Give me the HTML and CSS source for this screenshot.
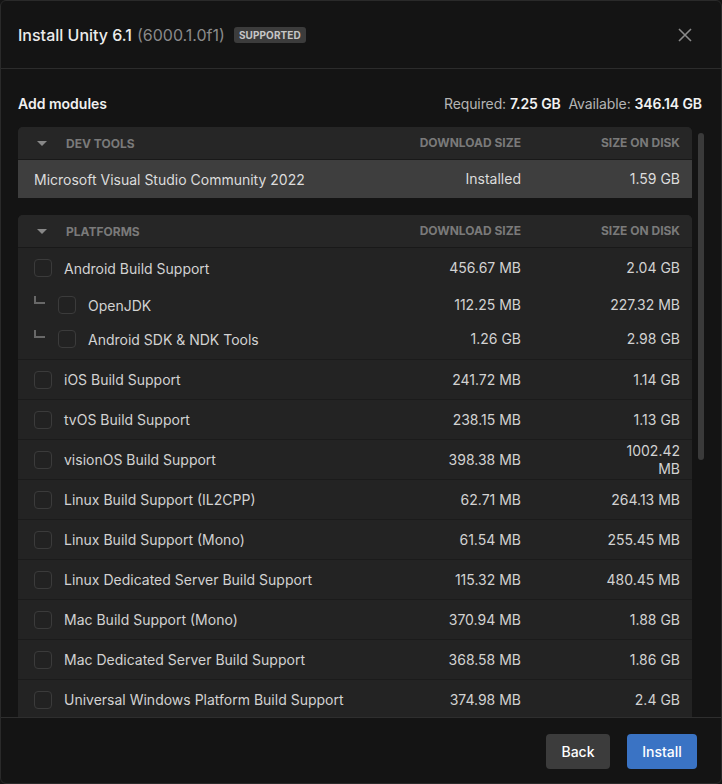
FILE: index.html
```html
<!DOCTYPE html>
<html lang="en">
<head>
<meta charset="utf-8">
<title>Install Unity 6.1</title>
<link rel="stylesheet" href="styles.css">
</head>
<body>
<div class="dialog">
  <header class="dlg-header">
    <div class="title">
      <span class="title-main">Install Unity 6.1</span>
      <span class="title-ver">(6000.1.0f1)</span>
      <span class="badge">SUPPORTED</span>
    </div>
    <button class="close" aria-label="Close">
      <svg width="14" height="14" viewBox="0 0 14 14"><path d="M1 1L13 13M13 1L1 13" stroke="#8a8a8a" stroke-width="1.6" fill="none"/></svg>
    </button>
  </header>

  <main class="dlg-body">
    <div class="summary">
      <span class="summary-title">Add modules</span>
      <span class="summary-info">Required: <b>7.25 GB</b>&nbsp;&nbsp;Available: <b>346.14 GB</b></span>
    </div>

    <div class="list">
      <section class="card">
        <div class="row head">
          <div class="name"><span class="caret"></span><span>DEV TOOLS</span></div>
          <div class="num">DOWNLOAD SIZE</div>
          <div class="num">SIZE ON DISK</div>
        </div>
        <div class="row item selected">
          <div class="name"><span>Microsoft Visual Studio Community 2022</span></div>
          <div class="num">Installed</div>
          <div class="num">1.59 GB</div>
        </div>
      </section>

      <section class="card">
        <div class="row head">
          <div class="name"><span class="caret"></span><span>PLATFORMS</span></div>
          <div class="num">DOWNLOAD SIZE</div>
          <div class="num">SIZE ON DISK</div>
        </div>
        <div class="group">
          <div class="row parent">
            <div class="name"><span class="check"></span><span>Android Build Support</span></div>
            <div class="num">456.67 MB</div>
            <div class="num">2.04 GB</div>
          </div>
          <div class="row sub">
            <div class="name"><span class="branch"></span><span class="check"></span><span>OpenJDK</span></div>
            <div class="num">112.25 MB</div>
            <div class="num">227.32 MB</div>
          </div>
          <div class="row sub">
            <div class="name"><span class="branch"></span><span class="check"></span><span>Android SDK &amp; NDK Tools</span></div>
            <div class="num">1.26 GB</div>
            <div class="num">2.98 GB</div>
          </div>
        </div>
        <div class="row item">
          <div class="name"><span class="check"></span><span>iOS Build Support</span></div>
          <div class="num">241.72 MB</div>
          <div class="num">1.14 GB</div>
        </div>
        <div class="row item">
          <div class="name"><span class="check"></span><span>tvOS Build Support</span></div>
          <div class="num">238.15 MB</div>
          <div class="num">1.13 GB</div>
        </div>
        <div class="row item">
          <div class="name"><span class="check"></span><span>visionOS Build Support</span></div>
          <div class="num">398.38 MB</div>
          <div class="num">1002.42 MB</div>
        </div>
        <div class="row item">
          <div class="name"><span class="check"></span><span>Linux Build Support (IL2CPP)</span></div>
          <div class="num">62.71 MB</div>
          <div class="num">264.13 MB</div>
        </div>
        <div class="row item">
          <div class="name"><span class="check"></span><span>Linux Build Support (Mono)</span></div>
          <div class="num">61.54 MB</div>
          <div class="num">255.45 MB</div>
        </div>
        <div class="row item">
          <div class="name"><span class="check"></span><span>Linux Dedicated Server Build Support</span></div>
          <div class="num">115.32 MB</div>
          <div class="num">480.45 MB</div>
        </div>
        <div class="row item">
          <div class="name"><span class="check"></span><span>Mac Build Support (Mono)</span></div>
          <div class="num">370.94 MB</div>
          <div class="num">1.88 GB</div>
        </div>
        <div class="row item">
          <div class="name"><span class="check"></span><span>Mac Dedicated Server Build Support</span></div>
          <div class="num">368.58 MB</div>
          <div class="num">1.86 GB</div>
        </div>
        <div class="row item">
          <div class="name"><span class="check"></span><span>Universal Windows Platform Build Support</span></div>
          <div class="num">374.98 MB</div>
          <div class="num">2.4 GB</div>
        </div>
      </section>
      <div class="thumb"></div>
    </div>
  </main>

  <footer class="dlg-footer">
    <button class="btn btn-back">Back</button>
    <button class="btn btn-primary">Install</button>
  </footer>
</div>
</body>
</html>
```

FILE: styles.css
```css
* { box-sizing: border-box; }
html, body { margin: 0; padding: 0; background: #141414; }
body {
  font-family: Inter, "Noto Sans", "Liberation Sans", sans-serif;
  color: #d2d2d2;
  font-size: 14px;
}
.dialog {
  width: 722px;
  height: 784px;
  background: #141414;
  border: 1px solid #2a2a2a;
  border-radius: 6px;
  display: flex;
  flex-direction: column;
  overflow: hidden;
}
.dlg-header {
  height: 68px;
  flex: none;
  border-bottom: 1px solid #2c2c2c;
  display: flex;
  align-items: center;
  justify-content: space-between;
  padding: 0 29px 0 17px;
}
.title { display: flex; align-items: center; }
.title-main { font-size: 16px; font-weight: 500; color: #ececec; }
.title-ver { font-size: 16px; color: #8a8a8a; margin-left: 5px; }
.badge {
  margin-left: 9px;
  background: #3c3c3c;
  color: #c6c6c6;
  font-size: 10px;
  font-weight: 700;
  letter-spacing: 0.1px;
  height: 16px;
  line-height: 16px;
  padding: 0 5px;
  border-radius: 3px;
}
.close {
  background: none;
  border: none;
  padding: 0;
  width: 14px;
  height: 14px;
  display: flex;
  cursor: pointer;
}
.dlg-body {
  flex: 1;
  min-height: 0;
  display: flex;
  flex-direction: column;
  padding: 24px 19px 0 17px;
}
.summary {
  display: flex;
  justify-content: space-between;
  align-items: center;
  height: 20px;
  margin-bottom: 14px;
  flex: none;
}
.summary-title { font-weight: 600; color: #f0f0f0; }
.summary-info { color: #b4b4b4; letter-spacing: -0.1px; }
.summary-info b { color: #f2f2f2; font-weight: 600; }
.list {
  flex: 1;
  min-height: 0;
  overflow: hidden;
  position: relative;
  margin-right: -10px;
  padding-right: 20px;
}
.thumb {
  position: absolute;
  right: 8px;
  top: 6px;
  width: 6px;
  height: 327px;
  background: #3a3a3a;
  border-radius: 3px;
}
.card {
  background: #232323;
  border-radius: 5px 5px 0 0;
  margin-bottom: 17px;
}
.row {
  display: grid;
  grid-template-columns: minmax(0, 1fr) 120px 77px;
  column-gap: 82px;
  align-items: center;
  padding: 0 12px 0 16px;
}
.row .num {
  display: flex;
  justify-content: flex-end;
  text-align: right;
  line-height: 18px;
}
.row .name { display: flex; align-items: center; white-space: nowrap; min-width: 0; }
.head {
  height: 33px;
  background: #262626;
  border-bottom: 1px solid #191919;
  border-radius: 5px 5px 0 0;
  font-size: 12px;
  font-weight: 700;
  color: #7a7a7a;
}
.head .num { white-space: nowrap; }
.caret {
  width: 0;
  height: 0;
  border-left: 5px solid transparent;
  border-right: 5px solid transparent;
  border-top: 5px solid #888;
  margin-left: 3px;
  margin-right: 19px;
}
.item { height: 40px; border-bottom: 1px solid #1b1b1b; }
.selected { height: 38px; background: #3e3e3e; border-bottom: none; color: #dcdcdc; }
.group { border-bottom: 1px solid #1b1b1b; padding-bottom: 3px; }
.parent { height: 40px; }
.sub { height: 34px; }
.check {
  width: 18px;
  height: 18px;
  border: 1px solid #3b3b3b;
  border-radius: 4px;
  background: #222;
  margin-right: 12px;
  flex: none;
}
.branch {
  width: 11px;
  height: 8px;
  border-left: 2px solid #686868;
  border-bottom: 2px solid #686868;
  margin-right: 13px;
  margin-bottom: 11px;
  flex: none;
}
.dlg-footer {
  flex: none;
  border-top: 1px solid #2e2e2e;
  padding: 16px 24px 14px 0;
  display: flex;
  justify-content: flex-end;
  gap: 17px;
}
.btn {
  height: 35px;
  border: none;
  border-radius: 4px;
  font-family: inherit;
  font-size: 14px;
  font-weight: 500;
  color: #ffffff;
  padding: 0 15px;
  cursor: pointer;
}
.btn-back { background: #3c3c3c; width: 64px; }
.btn-primary { background: #3a73c4; width: 70px; }
```
